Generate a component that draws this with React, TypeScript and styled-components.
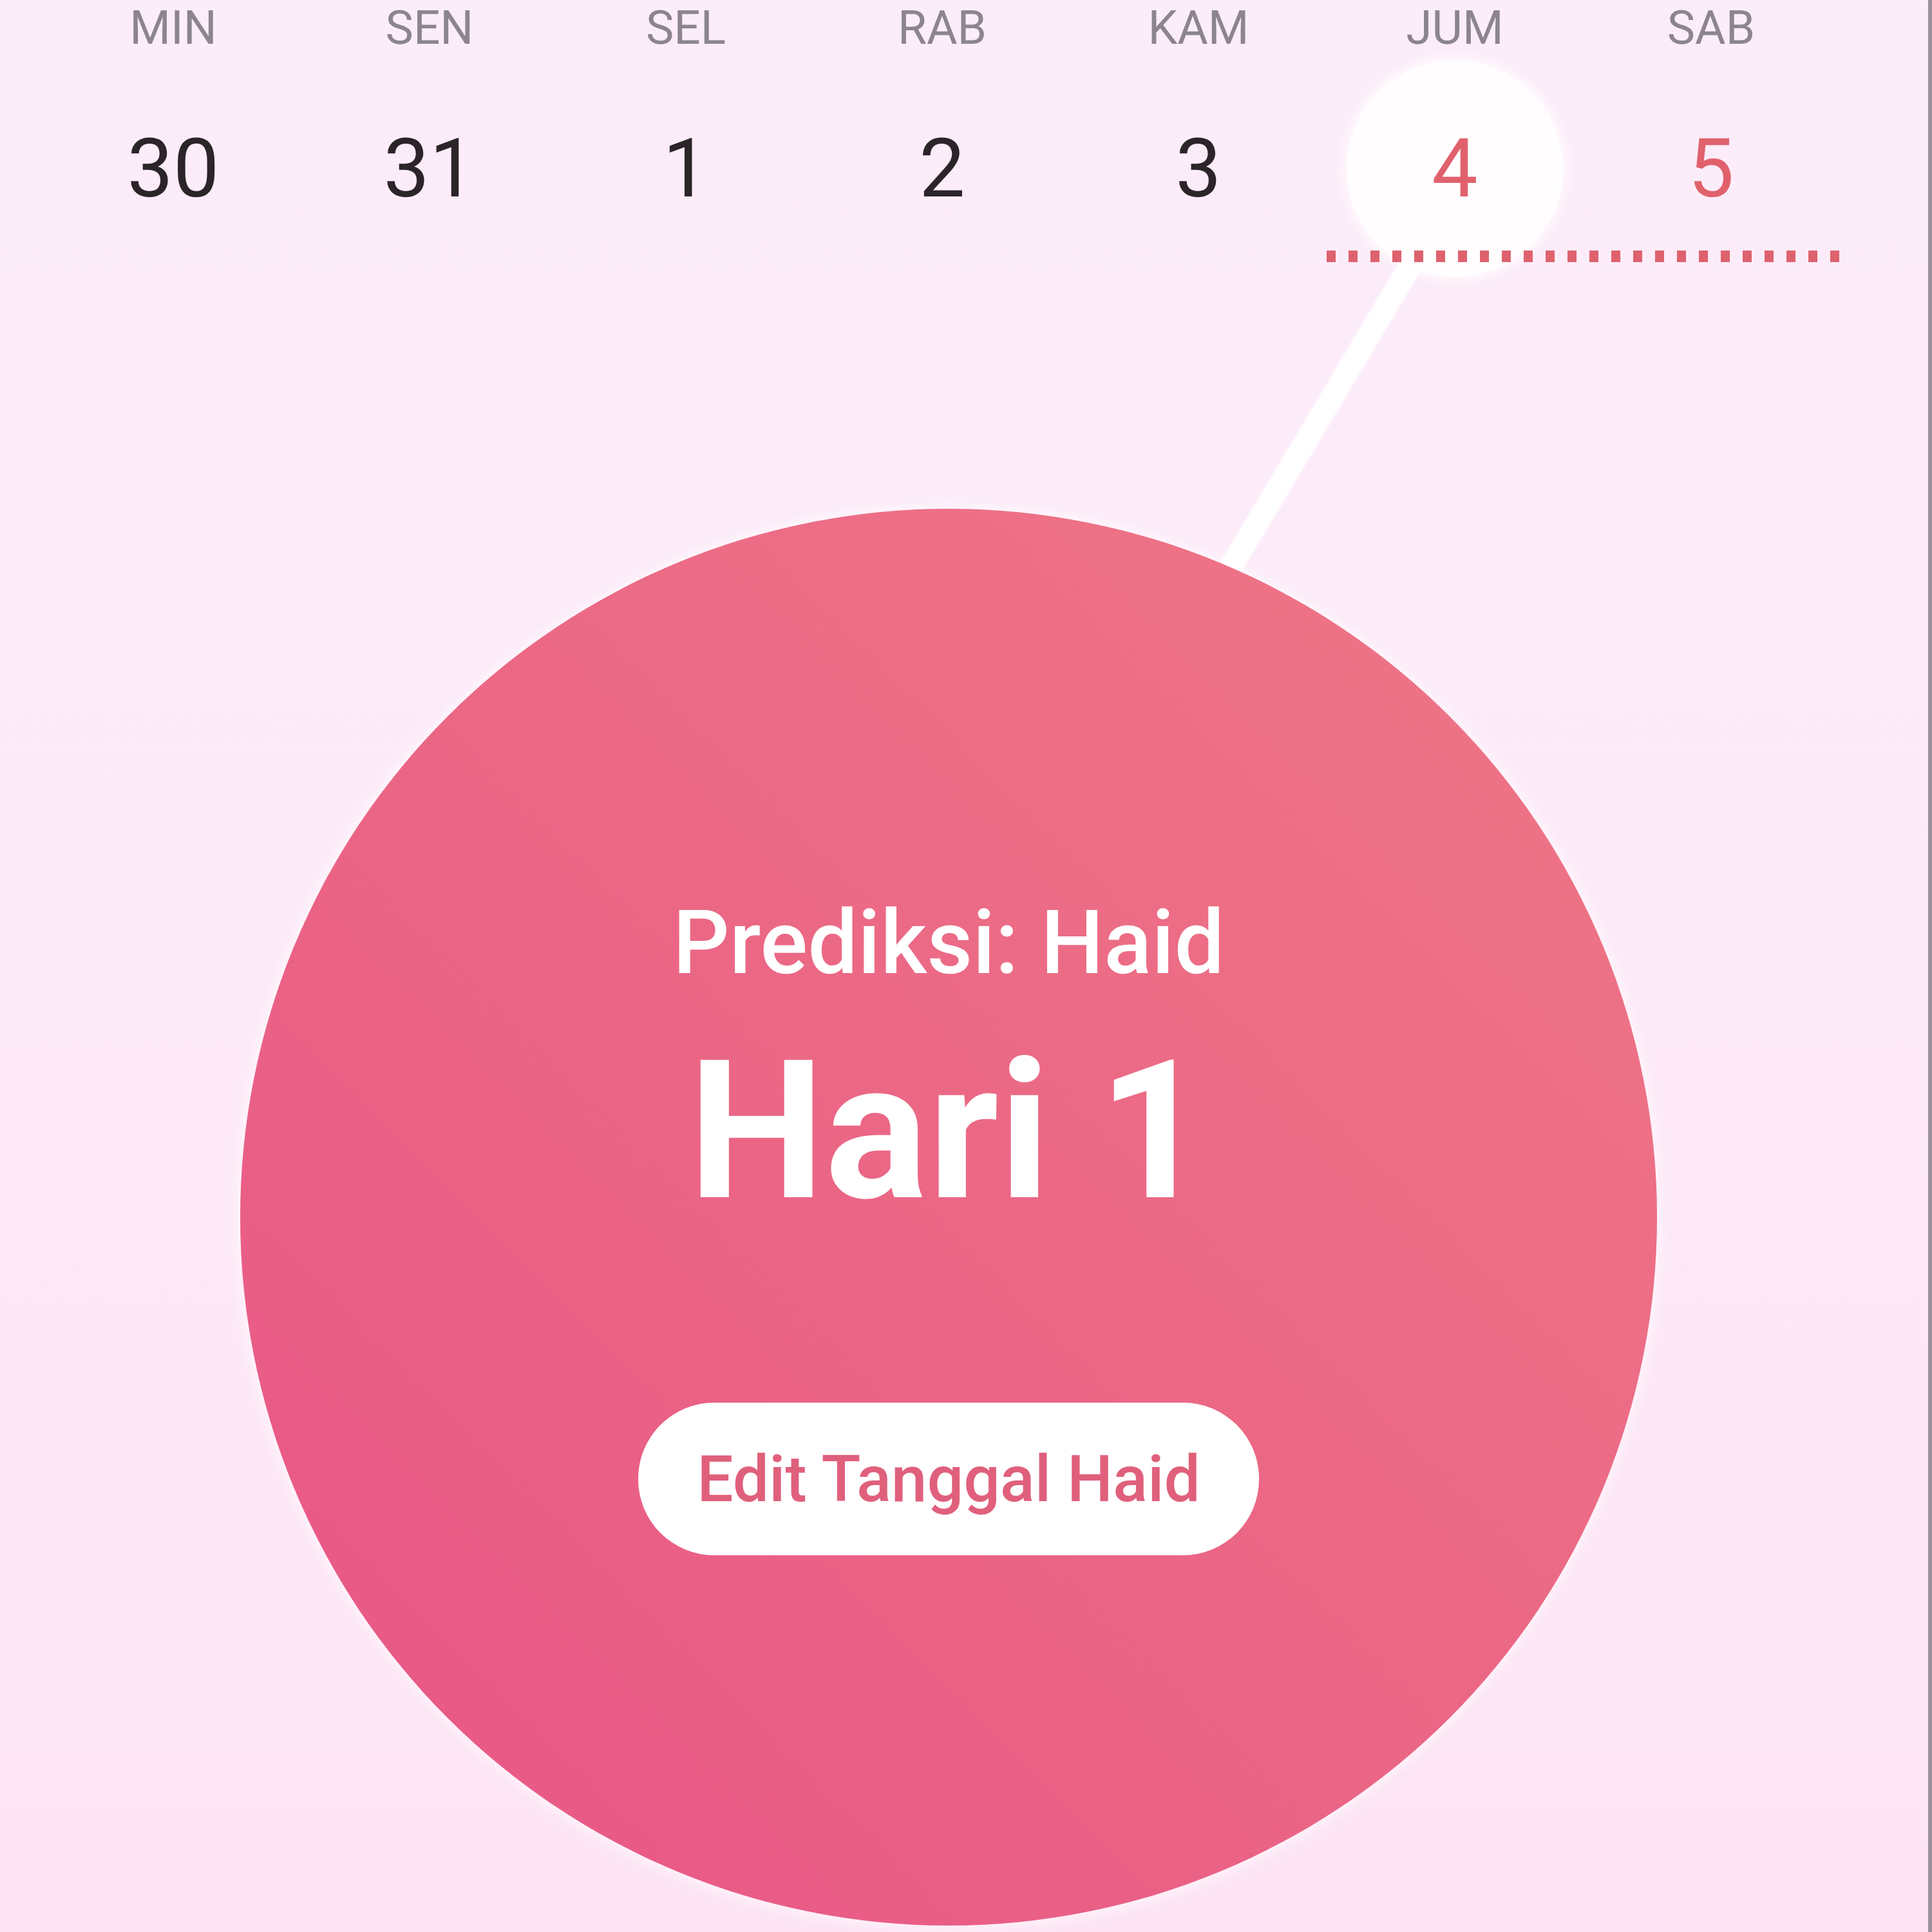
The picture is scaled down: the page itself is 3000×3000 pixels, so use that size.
import styled, { createGlobalStyle } from "styled-components";

const GlobalStyle = createGlobalStyle`
  html, body {
    margin: 0;
    padding: 0;
  }
  body {
    font-family: Roboto, "Noto Sans", "Liberation Sans", sans-serif;
    text-rendering: geometricPrecision;
    -webkit-font-smoothing: antialiased;
  }
`;

const weekDays = ["MIN", "SEN", "SEL", "RAB", "KAM", "JUM", "SAB"];

const days = [
  { label: "30", tone: "plain" },
  { label: "31", tone: "plain" },
  { label: "1", tone: "plain" },
  { label: "2", tone: "plain" },
  { label: "3", tone: "plain" },
  { label: "4", tone: "period", selected: true },
  { label: "5", tone: "period" },
];

function App() {
  return (
    <>
      <GlobalStyle />
      <Screen>
        <Connector width="3000" height="1200" viewBox="0 0 3000 1200">
          <line
            x1="2280"
            y1="262"
            x2="1840"
            y2="1000"
            stroke="#ffffff"
            strokeWidth="36"
            strokeLinecap="round"
          />
        </Connector>

        <Content>
          <WeekGrid>
            {weekDays.map((d) => (
              <DayLabel key={d}>{d}</DayLabel>
            ))}
            {days.map((d) => (
              <DayCell key={d.label}>
                <DayNumber $tone={d.tone} $selected={!!d.selected}>
                  {d.label}
                </DayNumber>
              </DayCell>
            ))}
          </WeekGrid>
          <PeriodRow>
            <PeriodTrack />
          </PeriodRow>

          <CycleCircle>
            <Caption>Prediksi: Haid</Caption>
            <DayCount>Hari 1</DayCount>
            <EditButton>Edit Tanggal Haid</EditButton>
          </CycleCircle>
        </Content>
      </Screen>
    </>
  );
}

export default App;

const Screen = styled.div`
  position: relative;
  width: 3000px;
  height: 3000px;
  box-sizing: border-box;
  overflow: hidden;
  background: linear-gradient(180deg, #fcedfa 0%, #fdeaf8 45%, #fde4f4 100%);
  border-right: 6px solid #9a919a;
`;

const Connector = styled.svg`
  position: absolute;
  top: 0;
  left: 0;
  z-index: 0;
  filter: blur(1.5px);
`;

const Content = styled.div`
  position: relative;
  z-index: 1;
  padding-left: 70px;
`;

const WeekGrid = styled.div`
  display: grid;
  grid-template-columns: repeat(7, 398px);
`;

const DayLabel = styled.div`
  height: 86px;
  line-height: 86px;
  text-align: center;
  font-size: 73px;
  font-weight: 400;
  color: #8d8491;
`;

const DayCell = styled.div`
  height: 336px;
  margin-top: 8px;
  display: flex;
  align-items: center;
  justify-content: center;
`;

const DayNumber = styled.span<{ $tone: string; $selected: boolean }>`
  width: 336px;
  height: 336px;
  border-radius: 50%;
  display: flex;
  align-items: center;
  justify-content: center;
  font-size: 127px;
  font-weight: 400;
  line-height: 1;
  color: ${(p) => (p.$tone === "period" ? "#e0616c" : "#2b2428")};
  background: ${(p) => (p.$selected ? "#fffdfe" : "transparent")};
  box-shadow: ${(p) =>
    p.$selected ? "0 0 18px 6px rgba(255, 255, 255, 0.75)" : "none"};
`;

const PeriodRow = styled.div`
  display: grid;
  grid-template-columns: repeat(7, 398px);
  height: 18px;
  margin-top: -41px;
`;

const PeriodTrack = styled.div`
  grid-column: 6 / span 2;
  background: repeating-linear-gradient(
    to right,
    #de626e 0 14px,
    transparent 14px 34px
  );
`;

const CycleCircle = styled.div`
  width: 2200px;
  height: 2200px;
  margin: 383px 0 0 303px;
  box-sizing: border-box;
  padding-top: 605px;
  border-radius: 50%;
  display: flex;
  flex-direction: column;
  align-items: center;
  background: linear-gradient(to top right, #e85587 0%, #eb6785 50%, #ef7786 100%);
  box-shadow: 0 0 22px 4px rgba(255, 255, 255, 0.7);
  color: #ffffff;
`;

const Caption = styled.div`
  font-size: 138px;
  font-weight: 500;
  line-height: 1;
`;

const DayCount = styled.div`
  margin-top: 75px;
  font-size: 300px;
  font-weight: 700;
  line-height: 1;
`;

const EditButton = styled.button`
  margin-top: 270px;
  width: 964px;
  height: 237px;
  border: none;
  border-radius: 118px;
  background: #ffffff;
  color: #e0607c;
  font-family: inherit;
  font-size: 100px;
  font-weight: 500;
  cursor: pointer;
`;
